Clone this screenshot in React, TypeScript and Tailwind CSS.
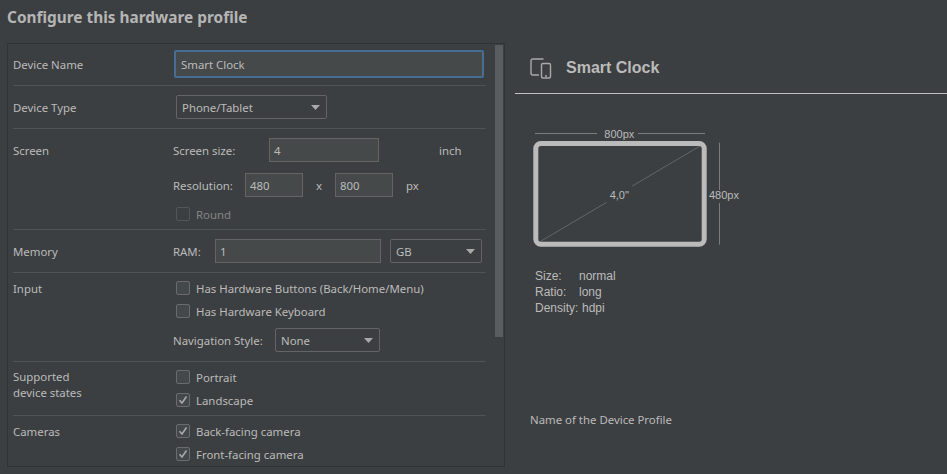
const Check = ({ label, checked, disabled, className = "" }: { label: string; checked?: boolean; disabled?: boolean; className?: string }) => (
  <div className={`flex items-center h-[14px] ml-[3px] ${className}`}>
    <div className={`w-[14px] h-[14px] rounded-[2px] border flex items-center justify-center shrink-0 ${disabled ? "border-[#535658]" : "border-[#6b6b6b] bg-[#43494a]"}`}>
      {checked && (
        <svg width="10" height="10" viewBox="0 0 10 10" fill="none">
          <path d="M1.5 5.2 L4 8 L8.5 1.5" stroke="#a9a9a9" strokeWidth="1.6" />
        </svg>
      )}
    </div>
    <span className={`ml-[6px] whitespace-nowrap pt-[2px] ${disabled ? "text-[#858585]" : ""}`}>{label}</span>
  </div>
);

const Select = ({ value, className = "" }: { value: string; className?: string }) => (
  <div className={`h-[24px] border border-[#646464] rounded-[2px] flex items-center justify-between pl-[5px] pr-[6px] ${className}`}>
    <span className="pt-[1px]">{value}</span>
    <svg width="9" height="5" viewBox="0 0 9 5"><path d="M0 0 H9 L4.5 5 Z" fill="#a9a9a9" /></svg>
  </div>
);

const Input = ({ value, className = "" }: { value: string; className?: string }) => (
  <div className={`h-[24px] border border-[#646464] bg-[#45494a] flex items-center pl-[4px] pt-[1px] ${className}`}>{value}</div>
);

const Row = ({ label, height, children, last }: { label: React.ReactNode; height: string; children: React.ReactNode; last?: boolean }) => (
  <div className={`flex ${height} ${last ? "" : "border-b border-[#505355]"}`}>
    <div className="w-[160px] shrink-0">{label}</div>
    <div className="flex-1 min-w-0 flex flex-col">{children}</div>
  </div>
);

export default function App() {
  return (
    <div
      className="w-[947px] h-[474px] overflow-hidden bg-[#3c3f41] text-[#bbbbbb] text-[11.4px] leading-[16px] flex"
      style={{ fontFamily: '"Noto Sans", sans-serif' }}
    >
      <div className="w-[515px] shrink-0 pl-[7px] flex flex-col">
        <h1 className="text-[15.4px] leading-[20px] font-bold pt-[8px] h-[43px] text-[#b5b5b5]">Configure this hardware profile</h1>
        <div className="w-[498px] h-[424px] border border-[#303233] flex">
          <div className="w-[478px] pl-[5px] flex flex-col">
            <Row height="h-[42px]" label={<div className="pt-[13px]">Device Name</div>}>
              <div className="pt-[6px] pl-[1px]">
                <div className="h-[28px] w-[310px] border-2 border-[#466d94] rounded-[2px] bg-[#45494a] flex items-center pl-[5px] pt-[1px]">Smart Clock</div>
              </div>
            </Row>
            <Row height="h-[43px]" label={<div className="pt-[14px]">Device Type</div>}>
              <div className="pt-[9px] pl-[3px]"><Select value="Phone/Tablet" className="w-[151px]" /></div>
            </Row>
            <Row height="h-[101px]" label={<div className="pt-[14px]">Screen</div>}>
              <div className="flex items-center mt-[9px]">
                <span className="w-[96px] pt-[1px]">Screen size:</span>
                <Input value="4" className="w-[110px]" />
                <span className="ml-[60px] pt-[1px]">inch</span>
              </div>
              <div className="flex items-center mt-[11px]">
                <span className="w-[72px] pt-[1px]">Resolution:</span>
                <Input value="480" className="w-[58px]" />
                <span className="w-[32px] text-center pt-[1px]">x</span>
                <Input value="800" className="w-[58px]" />
                <span className="ml-[13px] pt-[1px]">px</span>
              </div>
              <Check label="Round" disabled className="mt-[10px]" />
            </Row>
            <Row height="h-[43px]" label={<div className="pt-[14px]">Memory</div>}>
              <div className="flex items-center mt-[9px]">
                <span className="w-[42px] pt-[1px]">RAM:</span>
                <Input value="1" className="w-[166px]" />
                <Select value="GB" className="w-[92px] ml-[9px]" />
              </div>
            </Row>
            <Row height="h-[89px]" label={<div className="pt-[8px]">Input</div>}>
              <Check label="Has Hardware Buttons (Back/Home/Menu)" className="mt-[8px]" />
              <Check label="Has Hardware Keyboard" className="mt-[9px]" />
              <div className="flex items-center mt-[10px]">
                <span className="w-[102px] pt-[1px]">Navigation Style:</span>
                <Select value="None" className="w-[105px]" />
              </div>
            </Row>
            <Row height="h-[54px]" label={<div className="pt-[7px]">Supported<br />device states</div>}>
              <Check label="Portrait" className="mt-[8px]" />
              <Check label="Landscape" checked className="mt-[9px]" />
            </Row>
            <Row height="h-[50px]" last label={<div className="pt-[8px]">Cameras</div>}>
              <Check label="Back-facing camera" checked className="mt-[8px]" />
              <Check label="Front-facing camera" checked className="mt-[9px]" />
            </Row>
          </div>
          <div className="ml-[9px] mt-[1px] w-[8px] h-[292px] bg-[#5a5d5f]" />
        </div>
      </div>

      <div className="flex-1 flex flex-col min-w-0">
        <div className="h-[51px] mt-[43px] border-b border-[#c0c0c0] flex items-center pl-[15px]">
          <svg width="22" height="21" viewBox="0 0 22 21" fill="none" stroke="#a9a9a9" strokeWidth="1.4">
            <path d="M13.5 1 H3 Q1 1 1 3 V15 Q1 17 3 17 H9" />
            <rect x="11.5" y="5.5" width="9" height="14.5" rx="1.5" />
            <path d="M15 18 H17" />
          </svg>
          <span className="ml-[14px] text-[16px] font-bold" style={{ fontFamily: '"Liberation Sans", sans-serif' }}>Smart Clock</span>
        </div>
        <div className="pl-[15px] pt-[33px] text-[12px]" style={{ fontFamily: '"Liberation Sans", sans-serif' }}>
          <svg width="240" height="130" viewBox="0 0 240 130" className="block" style={{ fontFamily: '"Liberation Sans", sans-serif' }}>
            <path d="M5 6.5 H67 M108 6.5 H175 M189.5 15.7 V63 M189.5 76 V117.7" stroke="#7a7c7e" fill="none" />
            <path d="M10 114.7 L76.7 75.3 M102.3 59 L170 19" stroke="#636567" fill="none" />
            <rect x="5.8" y="16.5" width="168.4" height="100.7" rx="5" fill="none" stroke="#bbbbbb" strokeWidth="5" />
            <text x="89.3" y="11" fontSize="11" fill="#bbbbbb" textAnchor="middle">800px</text>
            <text x="89.3" y="72" fontSize="11" fill="#bbbbbb" textAnchor="middle">4,0"</text>
            <text x="179" y="72" fontSize="11" fill="#bbbbbb">480px</text>
          </svg>
          <div className="mt-[11px] pl-[5px] grid grid-cols-[44px_1fr] leading-[16px]">
            <span>Size:</span><span>normal</span>
            <span>Ratio:</span><span>long</span>
            <span className="whitespace-nowrap">Density:</span><span className="pl-[3px]">hdpi</span>
          </div>
        </div>
        <div className="pl-[15px] mt-[96px]">Name of the Device Profile</div>
      </div>
    </div>
  );
}
